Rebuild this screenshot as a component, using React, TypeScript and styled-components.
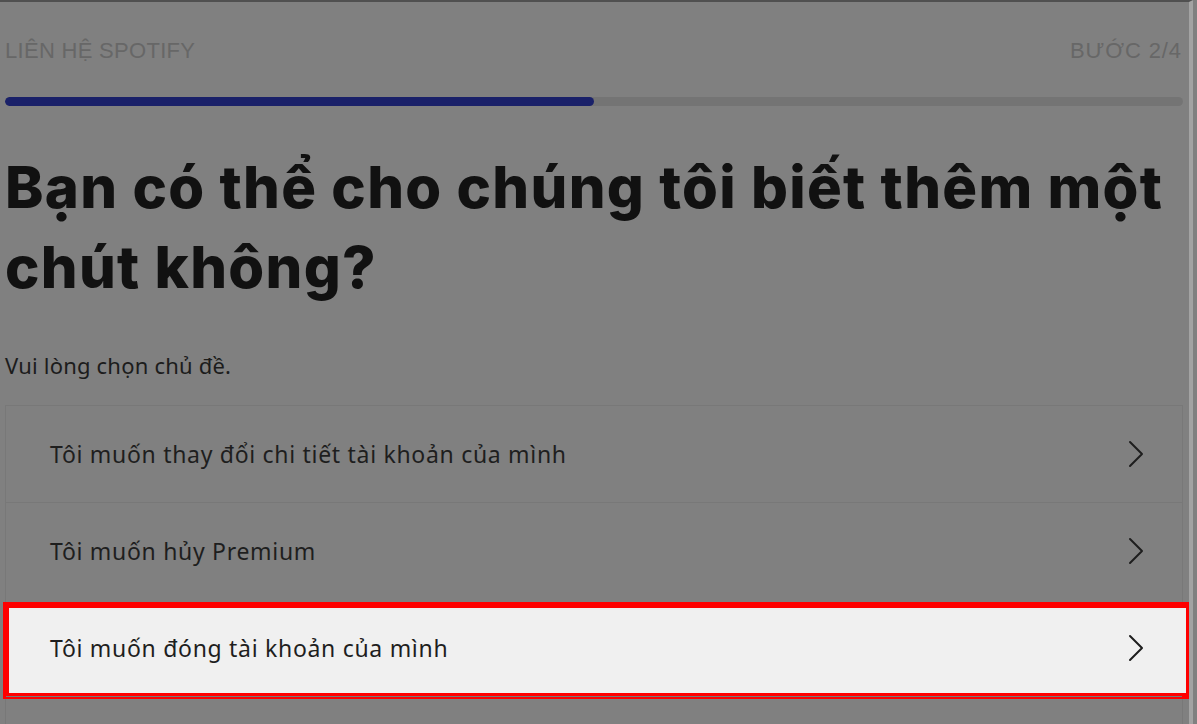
import { styled, createGlobalStyle } from "styled-components";

const GlobalStyle = createGlobalStyle`
  html, body {
    margin: 0;
    padding: 0;
    background: #808080;
  }
  body {
    font-family: "Liberation Sans", Arial, sans-serif;
  }
`;

const topics = [
  { text: "Tôi muốn thay đổi chi tiết tài khoản của mình", selected: false },
  { text: "Tôi muốn hủy Premium", selected: false },
  { text: "Tôi muốn đóng tài khoản của mình", selected: true },
];

const Chevron = () => (
  <svg width="18" height="28" viewBox="0 0 18 28" fill="none">
    <path d="M3 2 L15 14 L3 26" stroke="#1e1e1e" strokeWidth="2" strokeLinecap="round" strokeLinejoin="round" />
  </svg>
);

const App = () => {
  return (
    <>
      <GlobalStyle />
      <SPage>
        <SHeader>
          <span>LIÊN HỆ SPOTIFY</span>
          <span>BƯỚC 2/4</span>
        </SHeader>
        <SProgress>
          <SProgressFill style={{ width: `${(2 / 4) * 100}%` }} />
        </SProgress>
        <STitle>Bạn có thể cho chúng tôi biết thêm một chút không?</STitle>
        <SHint>Vui lòng chọn chủ đề.</SHint>
        <SList>
          {topics.map((topic) => (
            <SRow key={topic.text} $selected={topic.selected}>
              {topic.selected && <SHighlight />}
              <SRowText>{topic.text}</SRowText>
              <SRowIcon>
                <Chevron />
              </SRowIcon>
            </SRow>
          ))}
          <SRow $selected={false} />
        </SList>
      </SPage>
    </>
  );
};

export default App;

const SPage = styled.div`
  width: 1193px;
  height: 724px;
  box-sizing: border-box;
  overflow: hidden;
  border-top: 2px solid #505050;
  border-right: 4px solid #a3a3a3;
  padding: 0 6px 0 5px;
  background: #808080;
`;

const SHeader = styled.div`
  display: flex;
  justify-content: space-between;
  align-items: center;
  padding-top: 35px;
  height: 28px;
  font-size: 22px;
  color: #676767;
  letter-spacing: 0.3px;
  & > span:last-child {
    margin-right: 1px;
    letter-spacing: 0.9px;
  }
`;

const SProgress = styled.div`
  margin-top: 32px;
  height: 9px;
  border-radius: 5px;
  background: #747474;
  overflow: hidden;
`;

const SProgressFill = styled.div`
  height: 100%;
  border-radius: 5px;
  background: #1a2169;
`;

const STitle = styled.h1`
  margin: 41px 0 0;
  width: 1178px;
  font-family: Inter, "Noto Sans", sans-serif;
  font-weight: 800;
  font-size: 58px;
  line-height: 80px;
  letter-spacing: 1.3px;
  color: #111111;
`;

const SHint = styled.p`
  margin: 44px 0 0;
  font-family: "Noto Sans", Roboto, sans-serif;
  font-size: 22px;
  line-height: 28px;
  letter-spacing: 0.2px;
  color: #1c1c1c;
`;

const SList = styled.div`
  margin-top: 26px;
  border: 1px solid #787878;
  border-bottom: none;
`;

const SRow = styled.div<{ $selected: boolean }>`
  position: relative;
  display: flex;
  align-items: center;
  justify-content: space-between;
  height: 96px;
  padding: 0 37px 0 44px;
  border-top: 1px solid ${({ $selected }) => ($selected ? "transparent" : "#787878")};
  &:first-child {
    border-top: none;
  }
`;

const SHighlight = styled.div`
  position: absolute;
  left: -3px;
  right: -10px;
  top: 2px;
  bottom: -3px;
  border: 6px solid #ff0000;
  background: #f0f0f0;
`;

const SRowText = styled.span`
  position: relative;
  font-family: "Noto Sans", Roboto, sans-serif;
  font-size: 23px;
  color: #1e1e1e;
  letter-spacing: 0.7px;
`;

const SRowIcon = styled.span`
  position: relative;
  display: flex;
  align-items: center;
`;
